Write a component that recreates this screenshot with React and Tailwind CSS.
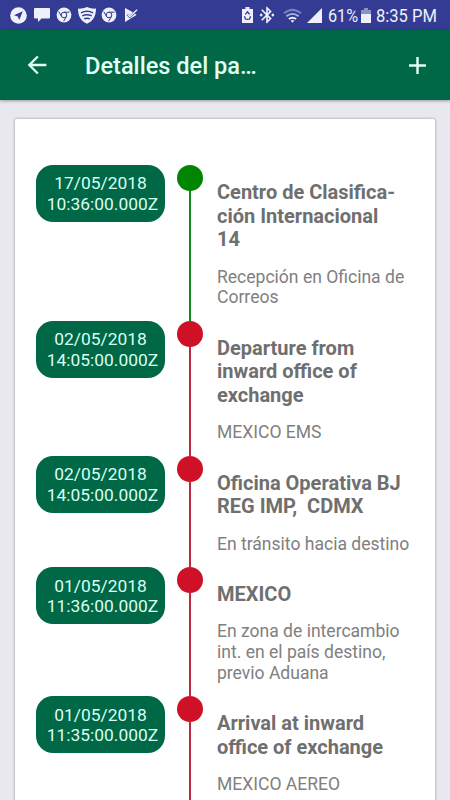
import { MdAdd, MdArrowBack, MdBluetoothConnected } from 'react-icons/md';

const events = [
  {
    date: '17/05/2018',
    time: '10:36:00.000Z',
    title: ['Centro de Clasifica-', 'ción Internacional', '14'],
    detail: ['Recepción en Oficina de', 'Correos'],
    current: true,
  },
  {
    date: '02/05/2018',
    time: '14:05:00.000Z',
    title: ['Departure from', 'inward office of', 'exchange'],
    detail: ['MEXICO EMS'],
  },
  {
    date: '02/05/2018',
    time: '14:05:00.000Z',
    title: ['Oficina Operativa BJ', 'REG IMP,\u00a0 CDMX'],
    detail: ['En tránsito hacia destino'],
  },
  {
    date: '01/05/2018',
    time: '11:36:00.000Z',
    title: ['MEXICO'],
    detail: ['En zona de intercambio', 'int. en el país destino,', 'previo Aduana'],
  },
  {
    date: '01/05/2018',
    time: '11:35:00.000Z',
    title: ['Arrival at inward', 'office of exchange'],
    detail: ['MEXICO AEREO'],
  },
];

function ChromeIcon() {
  return (
    <svg viewBox="0 0 16 16" className="w-4 h-4">
      <circle cx="8" cy="8" r="7.4" fill="#eef0fb" />
      <circle cx="8" cy="8" r="2.8" fill="none" stroke="#333c92" strokeWidth="1" />
      <path d="M8 5.200h5.500M5.500 9.300 2.700 4.600M10.500 9.300 7.600 14.300" fill="none" stroke="#333c92" strokeWidth="1" />
    </svg>
  );
}

function StatusBar() {
  return (
    <div className="flex h-[30px] shrink-0 items-center justify-between bg-[#333c92] pl-2.5 pr-3 text-[#eef0fb]">
      <div className="flex items-center gap-[6.500px]">
        <svg viewBox="0 0 17 17" className="w-[17px] h-[17px]">
          <circle cx="8.5" cy="8.5" r="8.3" fill="#eef0fb" />
          <path d="M12.800 4.200 4 8.200l3.800 1.200L9.200 13z" fill="#333c92" />
        </svg>
        <svg viewBox="0 0 16 16" className="w-4 h-4">
          <path d="M1 1h14q1 0 1 1v8.500q0 1-1 1H7.500L4 15v-3.500H1q-1 0-1-1V2q0-1 1-1z" fill="#eef0fb" />
        </svg>
        <ChromeIcon />
        <svg viewBox="0 0 18 17" className="w-[18px] h-[17px] -mx-px">
          <path d="M9 0c3 1.300 6 1.800 9 1.600 0 7-2.500 12.500-9 15.200C2.500 14.100 0 8.600 0 1.600 3 1.800 6 1.300 9 0z" fill="#eef0fb" />
          <path d="M3 5.800q6-3 12 0M4.300 8.900q4.700-2.300 9.400 0M6.200 11.800q2.800-1.200 5.600 0" fill="none" stroke="#333c92" strokeWidth="1.500" />
        </svg>
        <ChromeIcon />
        <svg viewBox="0 0 14 16" className="w-3.5 h-4">
          <path d="M1 1v14l11.500-7-1.500-1.500-5 5L2.500 8 4 6.500l2 2L9 5.300z" fill="#eef0fb" />
          <path d="M3.500 7.200 6 9.700l7-7" fill="none" stroke="#eef0fb" strokeWidth="1.400" />
        </svg>
      </div>
      <div className="flex items-center">
        <svg viewBox="0 0 11 16" className="w-[11px] h-4">
          <path d="M3.500 0h4v2H11v14H0V2h3.500z" fill="#eef0fb" />
          <path d="M3.300 7.400 5.500 4.800l2.200 2.600M2.400 9.300l1.300 3.200M8.600 9.300l-1.300 3.200M4.300 12.400h2.400" fill="none" stroke="#333c92" strokeWidth="1.300" />
        </svg>
        <MdBluetoothConnected className="ml-1 w-5 h-5" />
        <svg viewBox="0 0 20 15" className="ml-[6px] w-[19px] h-[15px]">
          <path d="M1 5.200q9-7.400 18 0" fill="none" stroke="#7880c2" strokeWidth="2.200" />
          <path d="M3.600 8.300q6.400-5 12.800 0" fill="none" stroke="#b0b5e0" strokeWidth="2" />
          <path d="M6.200 11.200q3.800-2.800 7.600 0" fill="none" stroke="#eef0fb" strokeWidth="2" />
          <path d="M10 15 8.100 12.800q1.900-1.200 3.800 0z" fill="#eef0fb" />
        </svg>
        <svg viewBox="0 0 15 15" className="ml-[5px] w-[15px] h-[15px]">
          <path d="M15 0v15H0z" fill="#eef0fb" />
        </svg>
        <span className="ml-1.5 w-[30px] text-[18px] leading-none">
          <span className="mt-px inline-block origin-left scale-x-[0.9]">61%</span>
        </span>
        <svg viewBox="0 0 10 15" className="ml-[3px] w-2.5 h-[15px]">
          <path d="M3 0h4v2h3v4H0V2h3z" fill="#8b92cb" />
          <path d="M0 6h10v9H0z" fill="#eef0fb" />
        </svg>
        <span className="ml-[5px] w-[62px] whitespace-nowrap text-[18px] leading-none">
          <span className="mt-px inline-block origin-left scale-x-[0.92]">8:35 PM</span>
        </span>
      </div>
    </div>
  );
}

function TopBar() {
  return (
    <header className="z-10 flex h-[70px] shrink-0 items-center bg-[#006847] text-[#e3fff4] shadow-[0_1px_3px_rgba(0,0,0,0.35)]">
      <MdArrowBack className="ml-[23px] w-7 h-7" />
      <h1 className="ml-[34px] mt-[2px] flex-1 text-[23.600px] font-medium leading-7">Detalles del pa…</h1>
      <MdAdd className="mr-[18px] w-[29px] h-[29px]" />
    </header>
  );
}

function TrackingEvent({ event }) {
  return (
    <li className="flex">
      <div className="flex h-[57px] w-[129px] shrink-0 flex-col items-center justify-center rounded-[17px] bg-[#006847] pt-px text-[17.400px] leading-[20.400px] text-[#d9fff0]">
        <span>{event.date}</span>
        <span className="ml-1">{event.time}</span>
      </div>
      <div className="ml-3 flex w-[26px] shrink-0 flex-col items-center">
        <span className={`h-[26px] w-[26px] rounded-full ${event.current ? 'bg-[#008500]' : 'bg-[#ce1126]'}`} />
        <span className={`w-[2.500px] flex-1 ${event.current ? 'bg-[#148a1c]' : 'bg-[#b92a40]'}`} />
      </div>
      <div className="ml-3.5 whitespace-nowrap pt-4 pb-[12.600px]">
        <h2 className="text-[20px] font-bold leading-[23.700px] text-[#6f6f6f]">
          {event.title.map((line) => (
            <span key={line} className="block">{line}</span>
          ))}
        </h2>
        <p className="mt-[14.700px] text-[17.550px] leading-[20.700px] text-[#808080]">
          {event.detail.map((line) => (
            <span key={line} className="block">{line}</span>
          ))}
        </p>
      </div>
    </li>
  );
}

export default function App() {
  return (
    <div className="flex h-[800px] w-[450px] flex-col overflow-hidden bg-[#e9e8ee] font-['Roboto',sans-serif]">
      <StatusBar />
      <TopBar />
      <main className="mx-[15px] mt-[19px] flex-1 rounded-t-[2px] bg-white pl-[21px] pt-[45.800px] shadow-[0_0_3px_rgba(0,0,0,0.4)]">
        <ul>
          {events.map((event) => (
            <TrackingEvent key={event.date + event.time + event.title[0]} event={event} />
          ))}
        </ul>
      </main>
    </div>
  );
}
